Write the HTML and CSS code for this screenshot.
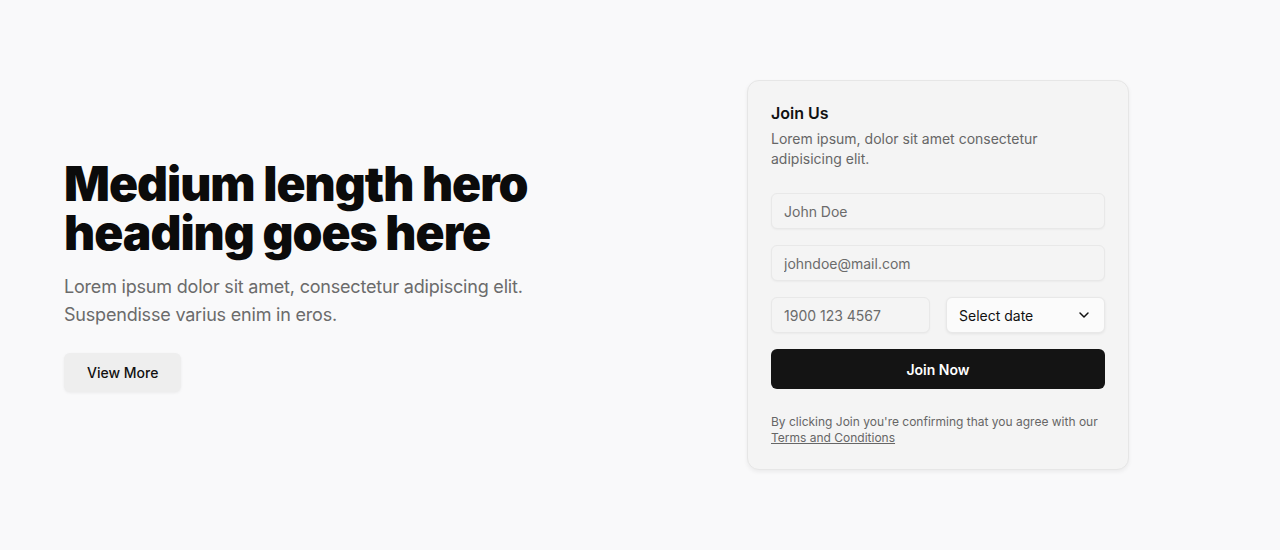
FILE: index.html
```html
<!DOCTYPE html>
<html lang="en">
<head>
  <meta charset="UTF-8">
  <meta name="viewport" content="width=device-width, initial-scale=1">
  <title>Hero - Join Us</title>
  <link rel="stylesheet" href="styles.css">
</head>
<body>

<section class="hero">

  <div class="hero-text">
    <h1>Medium length hero heading goes here</h1>
    <p>Lorem ipsum dolor sit amet, consectetur adipiscing elit. Suspendisse varius enim in eros.</p>
    <button class="btn-secondary">View More</button>
  </div>

  <form class="card" onsubmit="return false">
    <h2>Join Us</h2>
    <p class="card-desc">Lorem ipsum, dolor sit amet consectetur adipisicing elit.</p>

    <div class="fields">
      <input type="text" placeholder="John Doe">
      <input type="email" placeholder="johndoe@mail.com">
      <div class="row">
        <input type="tel" placeholder="1900 123 4567">
        <div class="select">
          <span>Select date</span>
          <svg width="16" height="16" viewBox="0 0 24 24" fill="none" stroke="#111" stroke-width="2.2" stroke-linecap="round" stroke-linejoin="round"><path d="M6 9l6 6 6-6"/></svg>
        </div>
      </div>
      <button class="btn-primary">Join Now</button>
    </div>

    <p class="terms">By clicking Join you're confirming that you agree with our <a href="#">Terms and Conditions</a></p>
  </form>

</section>

</body>
</html>
```

FILE: styles.css
```css
body {
  margin: 0;
  font-family: 'Inter', 'Roboto', sans-serif;
  background-color: #f9f9fa;
  color: #111;
}
.hero {
  height: 550px;
  box-sizing: border-box;
  padding: 0 151px 0 64px;
  display: grid;
  grid-template-columns: 1fr 382px;
  align-items: center;
}
.hero-text {
  max-width: 490px;
}
.hero-text h1 {
  margin: 0 0 16px;
  font-size: 48px;
  line-height: 49px;
  font-weight: 900;
  letter-spacing: -1px;
  color: #0b0b0b;
}
.hero-text p {
  margin: 0 0 24px;
  font-size: 18px;
  line-height: 28px;
  color: #6b6b6b;
  letter-spacing: -0.2px;
}
.btn-secondary {
  font-family: inherit;
  font-size: 14px;
  font-weight: 500;
  color: #111;
  background: #eeeeee;
  border: none;
  border-radius: 6px;
  padding: 0 23px;
  height: 39px;
  box-shadow: 0 1px 3px rgba(0,0,0,0.06);
  cursor: pointer;
}
.card {
  background: #f4f4f4;
  border: 1px solid #e6e6e6;
  border-radius: 12px;
  box-shadow: 0 2px 4px rgba(0,0,0,0.06);
  padding: 21px 23px 23px;
}
.card h2 {
  margin: 0 0 5px;
  font-size: 16px;
  line-height: 22px;
  font-weight: 600;
}
.card-desc {
  margin: 0 0 24px;
  font-size: 14px;
  line-height: 20px;
  color: #666;
}
.fields {
  display: flex;
  flex-direction: column;
  gap: 16px;
}
.fields input,
.select {
  box-sizing: border-box;
  height: 36px;
  padding: 0 12px;
  border: 1px solid #e8e8e8;
  border-radius: 6px;
  background: #f4f4f4;
  font-family: inherit;
  font-size: 14px;
  color: #111;
  box-shadow: 0 1px 2px rgba(0,0,0,0.04);
  width: 100%;
}
.fields input::placeholder {
  color: #6b6b6b;
}
.row {
  display: grid;
  grid-template-columns: 1fr 1fr;
  gap: 16px;
}
.select {
  background: #fbfbfb;
  display: flex;
  align-items: center;
  justify-content: space-between;
  box-shadow: 0 1px 3px rgba(0,0,0,0.07);
}
.btn-primary {
  height: 40px;
  background: #141414;
  color: #fff;
  border: none;
  border-radius: 6px;
  font-family: inherit;
  font-size: 14px;
  font-weight: 600;
  cursor: pointer;
}
.terms {
  margin: 25px 0 0;
  font-size: 12px;
  line-height: 16px;
  color: #666;
}
.terms a {
  color: #666;
}
```
